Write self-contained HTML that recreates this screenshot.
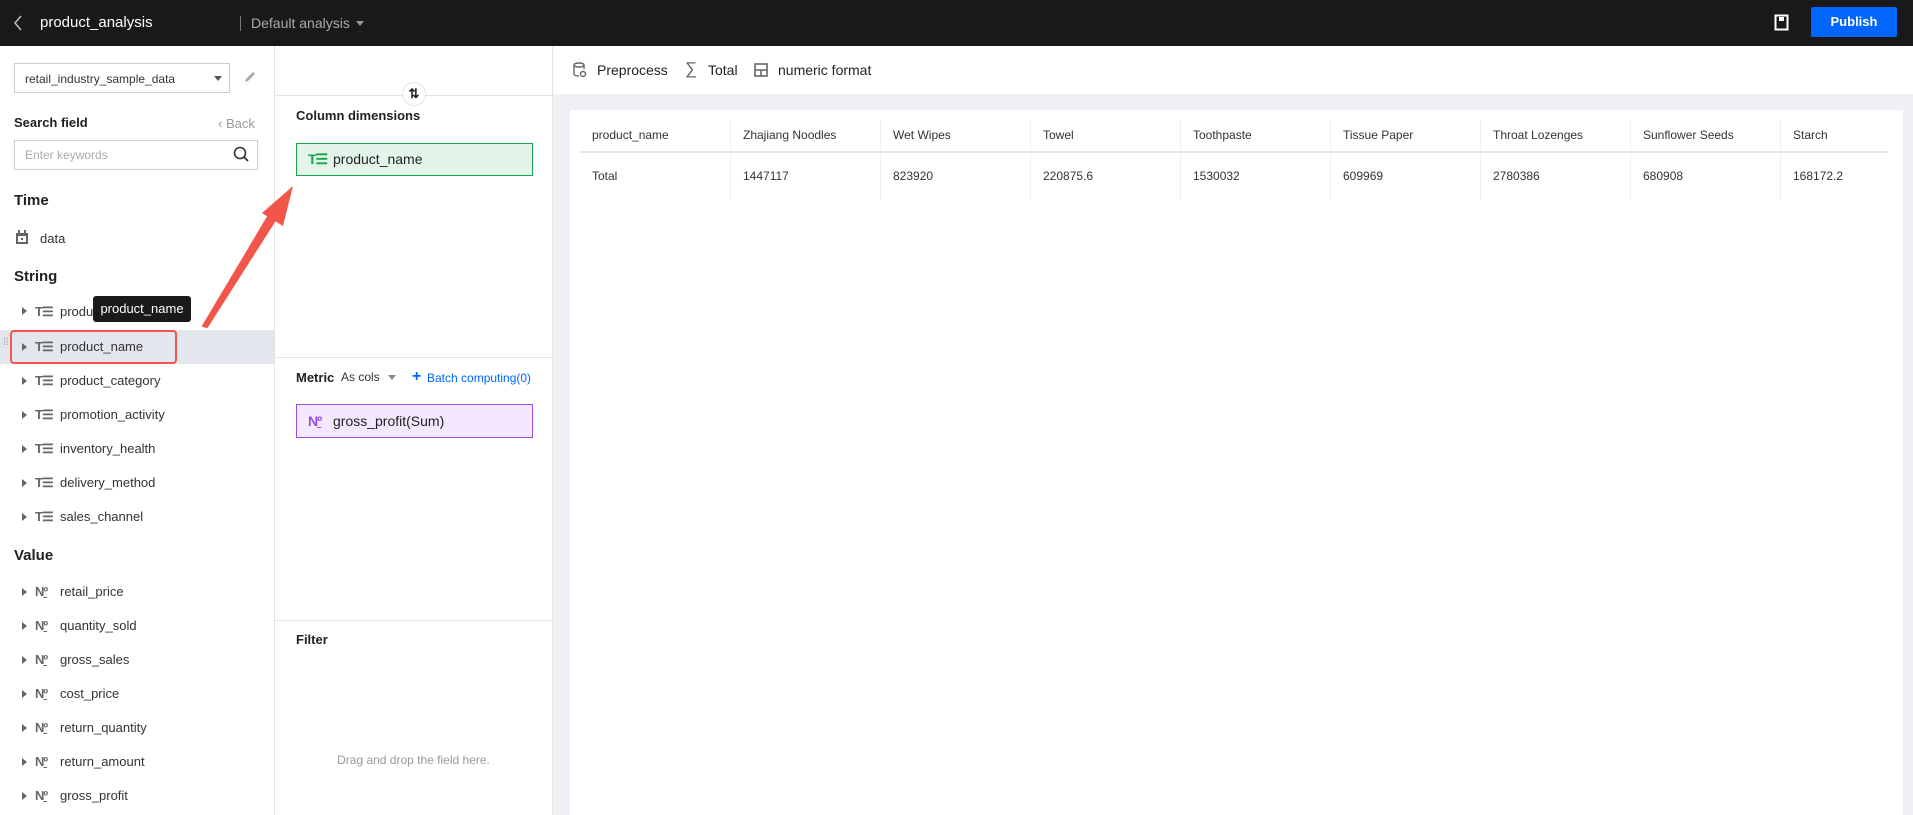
<!DOCTYPE html>
<html><head><meta charset="utf-8"><style>
*{box-sizing:border-box;margin:0;padding:0}
body{width:1913px;height:815px;overflow:hidden;font-family:"Liberation Sans",sans-serif;background:#fff;position:relative;color:#222}
.a{position:absolute;white-space:nowrap}
.hdr{left:0;top:0;width:1913px;height:46px;background:#191919}
.sec{font-weight:bold;font-size:15px;color:#222}
.item{font-size:13px;color:#333}
.ic{font-size:13px;color:#666;font-weight:bold;letter-spacing:-1px}
.tri{width:0;height:0;border-left:5px solid #666;border-top:4px solid transparent;border-bottom:4px solid transparent}
.th{font-size:12px;color:#333}
</style></head><body>
<div class="a hdr"></div>
<svg class="a" style="left:12px;top:14px" width="12" height="18"><path d="M9 2 L3 9 L9 16" stroke="#bbb" stroke-width="1.6" fill="none"/></svg>
<div class="a" style="left:40px;top:14px;font-size:15px;color:#fff">product_analysis</div>
<div class="a" style="left:240px;top:16px;width:1px;height:15px;background:#777"></div>
<div class="a" style="left:251px;top:15px;font-size:14px;color:#aaa">Default analysis</div>
<div class="a" style="left:356px;top:21px;border-left:4px solid transparent;border-right:4px solid transparent;border-top:5px solid #999"></div>
<svg class="a" style="left:1774px;top:14px" width="16" height="17"><rect x="1.5" y="1.5" width="12" height="14" fill="none" stroke="#fff" stroke-width="2"/><rect x="5" y="3" width="5" height="4" fill="#fff"/></svg>
<div class="a" style="left:1811px;top:7px;width:86px;height:30px;background:#0066ff;border-radius:2px;color:#fff;font-size:13px;font-weight:bold;text-align:center;line-height:30px">Publish</div>

<!-- left panel -->
<div class="a" style="left:274px;top:46px;width:1px;height:769px;background:#e3e3e3"></div>
<div class="a" style="left:14px;top:63px;width:216px;height:30px;border:1px solid #c9ccd4"></div>
<div class="a" style="left:25px;top:72px;font-size:12px;color:#333">retail_industry_sample_data</div>
<div class="a" style="left:214px;top:76px;border-left:4px solid transparent;border-right:4px solid transparent;border-top:5px solid #555"></div>
<svg class="a" style="left:243px;top:70px" width="14" height="14"><path d="M2 12 L3 9 L10 2 L12 4 L5 11 Z" fill="#aaa"/></svg>
<div class="a" style="left:14px;top:115px;font-size:13px;font-weight:bold">Search field</div>
<div class="a" style="left:218px;top:116px;font-size:13px;color:#999">‹ Back</div>
<div class="a" style="left:14px;top:140px;width:244px;height:30px;border:1px solid #c9ccd4"></div>
<div class="a" style="left:25px;top:148px;font-size:12px;color:#aaa">Enter keywords</div>
<svg class="a" style="left:233px;top:146px" width="17" height="17"><circle cx="7" cy="7" r="5.5" stroke="#333" stroke-width="1.6" fill="none"/><path d="M11 11 L15 15" stroke="#333" stroke-width="1.8"/></svg>
<div class="a sec" style="left:14px;top:192px">Time</div>
<svg class="a" style="left:15px;top:230px" width="14" height="15"><rect x="1" y="3" width="12" height="11" fill="#666"/><rect x="3" y="0" width="2" height="4" fill="#666"/><rect x="9" y="0" width="2" height="4" fill="#666"/><rect x="3" y="6" width="8" height="6" fill="#fff"/><rect x="6" y="8" width="2" height="2" fill="#666"/></svg>
<div class="a item" style="left:40px;top:231px">data</div>
<div class="a sec" style="left:14px;top:268px">String</div>

<div class="a" style="left:0;top:330px;width:274px;height:34px;background:#e3e6ed"></div>
<div class="a" style="left:10px;top:330px;width:167px;height:34px;border:2px solid #f2564a;border-radius:4px"></div>
<div class="a" style="left:3px;top:340px;font-size:10px;color:#999;line-height:5px">⁞⁞</div>

<div class="a tri" style="left:22px;top:307px"></div><div class="a ic" style="left:35px;top:304px">T☰</div><div class="a item" style="left:60px;top:304px">product_id</div>
<div class="a tri" style="left:22px;top:343px"></div><div class="a ic" style="left:35px;top:339px">T☰</div><div class="a item" style="left:60px;top:339px">product_name</div>
<div class="a tri" style="left:22px;top:377px"></div><div class="a ic" style="left:35px;top:373px">T☰</div><div class="a item" style="left:60px;top:373px">product_category</div>
<div class="a tri" style="left:22px;top:411px"></div><div class="a ic" style="left:35px;top:407px">T☰</div><div class="a item" style="left:60px;top:407px">promotion_activity</div>
<div class="a tri" style="left:22px;top:445px"></div><div class="a ic" style="left:35px;top:441px">T☰</div><div class="a item" style="left:60px;top:441px">inventory_health</div>
<div class="a tri" style="left:22px;top:479px"></div><div class="a ic" style="left:35px;top:475px">T☰</div><div class="a item" style="left:60px;top:475px">delivery_method</div>
<div class="a tri" style="left:22px;top:513px"></div><div class="a ic" style="left:35px;top:509px">T☰</div><div class="a item" style="left:60px;top:509px">sales_channel</div>
<div class="a sec" style="left:14px;top:547px">Value</div>
<div class="a tri" style="left:22px;top:588px"></div><div class="a ic" style="left:35px;top:584px">N<u>º</u></div><div class="a item" style="left:60px;top:584px">retail_price</div>
<div class="a tri" style="left:22px;top:622px"></div><div class="a ic" style="left:35px;top:618px">N<u>º</u></div><div class="a item" style="left:60px;top:618px">quantity_sold</div>
<div class="a tri" style="left:22px;top:656px"></div><div class="a ic" style="left:35px;top:652px">N<u>º</u></div><div class="a item" style="left:60px;top:652px">gross_sales</div>
<div class="a tri" style="left:22px;top:690px"></div><div class="a ic" style="left:35px;top:686px">N<u>º</u></div><div class="a item" style="left:60px;top:686px">cost_price</div>
<div class="a tri" style="left:22px;top:724px"></div><div class="a ic" style="left:35px;top:720px">N<u>º</u></div><div class="a item" style="left:60px;top:720px">return_quantity</div>
<div class="a tri" style="left:22px;top:758px"></div><div class="a ic" style="left:35px;top:754px">N<u>º</u></div><div class="a item" style="left:60px;top:754px">return_amount</div>
<div class="a tri" style="left:22px;top:792px"></div><div class="a ic" style="left:35px;top:788px">N<u>º</u></div><div class="a item" style="left:60px;top:788px">gross_profit</div>

<div class="a" style="left:93px;top:296px;width:98px;height:26px;background:#1a1a1a;border-radius:3px;color:#fff;font-size:13px;line-height:26px;text-align:center">product_name</div>

<!-- middle -->
<div class="a" style="left:552px;top:46px;width:1px;height:769px;background:#e3e3e3"></div>
<div class="a" style="left:275px;top:95px;width:277px;height:1px;background:#e3e3e3"></div>
<div class="a" style="left:402px;top:82px;width:24px;height:24px;border-radius:50%;border:1px solid #e3e3e3;background:#fff;font-size:13px;font-weight:bold;text-align:center;line-height:22px">⇅</div>
<div class="a" style="left:296px;top:108px;font-size:13px;font-weight:bold">Column dimensions</div>
<div class="a" style="left:296px;top:143px;width:237px;height:33px;background:#e3f4ea;border:1px solid #16a34a"></div>
<div class="a" style="left:308px;top:151px;font-size:14px;font-weight:bold;color:#16a34a;letter-spacing:-1px">T☰</div>
<div class="a" style="left:333px;top:151px;font-size:14px;color:#222">product_name</div>
<div class="a" style="left:275px;top:357px;width:277px;height:1px;background:#e3e3e3"></div>
<div class="a" style="left:296px;top:370px;font-size:13px;font-weight:bold">Metric</div>
<div class="a" style="left:341px;top:370px;font-size:12px;color:#333">As cols</div>
<div class="a" style="left:388px;top:375px;border-left:4px solid transparent;border-right:4px solid transparent;border-top:5px solid #888"></div>
<div class="a" style="left:412px;top:368px;font-size:16px;font-weight:bold;color:#0066ff">+</div>
<div class="a" style="left:427px;top:371px;font-size:12px;color:#0066ff">Batch computing(0)</div>
<div class="a" style="left:296px;top:404px;width:237px;height:34px;background:#f3e8fd;border:1px solid #9b4de6"></div>
<div class="a" style="left:308px;top:413px;font-size:14px;font-weight:bold;color:#9b4de6;letter-spacing:-1px">N<u>º</u></div>
<div class="a" style="left:333px;top:413px;font-size:14px;color:#222">gross_profit(Sum)</div>
<div class="a" style="left:275px;top:620px;width:277px;height:1px;background:#e3e3e3"></div>
<div class="a" style="left:296px;top:632px;font-size:13px;font-weight:bold">Filter</div>
<div class="a" style="left:275px;top:753px;width:277px;text-align:center;font-size:12px;color:#999">Drag and drop the field here.</div>

<!-- arrow -->
<svg class="a" style="left:0;top:0" width="600" height="400"><path d="M203 326 L207 327 L279 214 L272 210 Z" fill="#f2564a" stroke="#f2564a" stroke-width="2" stroke-linejoin="round"/><path d="M293 186 L283 226 L262 213 Z" fill="#f2564a"/></svg>

<!-- right -->
<div class="a" style="left:553px;top:94px;width:1360px;height:721px;background:#eff0f4"></div>
<svg class="a" style="left:573px;top:62px" width="14" height="16"><ellipse cx="6" cy="3" rx="5" ry="2" fill="none" stroke="#666" stroke-width="1.4"/><path d="M1 3 V12 Q1 14 6 14 M11 3 V7" stroke="#666" stroke-width="1.4" fill="none"/><circle cx="10" cy="12" r="2.5" fill="none" stroke="#666" stroke-width="1.4"/></svg>
<div class="a" style="left:597px;top:62px;font-size:14px;color:#222">Preprocess</div>
<div class="a" style="left:685px;top:59px;font-size:17px;color:#666">∑</div>
<div class="a" style="left:708px;top:62px;font-size:14px;color:#222">Total</div>
<svg class="a" style="left:754px;top:63px" width="14" height="14"><rect x="1" y="1" width="12" height="12" fill="none" stroke="#666" stroke-width="1.6"/><path d="M1 7 H13 M7 7 V13" stroke="#666" stroke-width="1.6"/></svg>
<div class="a" style="left:778px;top:62px;font-size:14px;color:#222">numeric format</div>
<div class="a" style="left:570px;top:110px;width:1333px;height:705px;background:#fff"></div>
<div class="a" style="left:580px;top:151px;width:1308px;height:2px;background:#e6e6e6"></div>
<div class="a" style="left:730px;top:120px;width:1px;height:80px;background:#eee"></div>
<div class="a" style="left:880px;top:120px;width:1px;height:80px;background:#eee"></div>
<div class="a" style="left:1030px;top:120px;width:1px;height:80px;background:#eee"></div>
<div class="a" style="left:1180px;top:120px;width:1px;height:80px;background:#eee"></div>
<div class="a" style="left:1330px;top:120px;width:1px;height:80px;background:#eee"></div>
<div class="a" style="left:1480px;top:120px;width:1px;height:80px;background:#eee"></div>
<div class="a" style="left:1630px;top:120px;width:1px;height:80px;background:#eee"></div>
<div class="a" style="left:1780px;top:120px;width:1px;height:80px;background:#eee"></div>
<div class="a th" style="left:592px;top:128px">product_name</div><div class="a th" style="left:592px;top:169px">Total</div>
<div class="a th" style="left:743px;top:128px">Zhajiang Noodles</div><div class="a th" style="left:743px;top:169px">1447117</div>
<div class="a th" style="left:893px;top:128px">Wet Wipes</div><div class="a th" style="left:893px;top:169px">823920</div>
<div class="a th" style="left:1043px;top:128px">Towel</div><div class="a th" style="left:1043px;top:169px">220875.6</div>
<div class="a th" style="left:1193px;top:128px">Toothpaste</div><div class="a th" style="left:1193px;top:169px">1530032</div>
<div class="a th" style="left:1343px;top:128px">Tissue Paper</div><div class="a th" style="left:1343px;top:169px">609969</div>
<div class="a th" style="left:1493px;top:128px">Throat Lozenges</div><div class="a th" style="left:1493px;top:169px">2780386</div>
<div class="a th" style="left:1643px;top:128px">Sunflower Seeds</div><div class="a th" style="left:1643px;top:169px">680908</div>
<div class="a th" style="left:1793px;top:128px">Starch</div><div class="a th" style="left:1793px;top:169px">168172.2</div>
</body></html>
